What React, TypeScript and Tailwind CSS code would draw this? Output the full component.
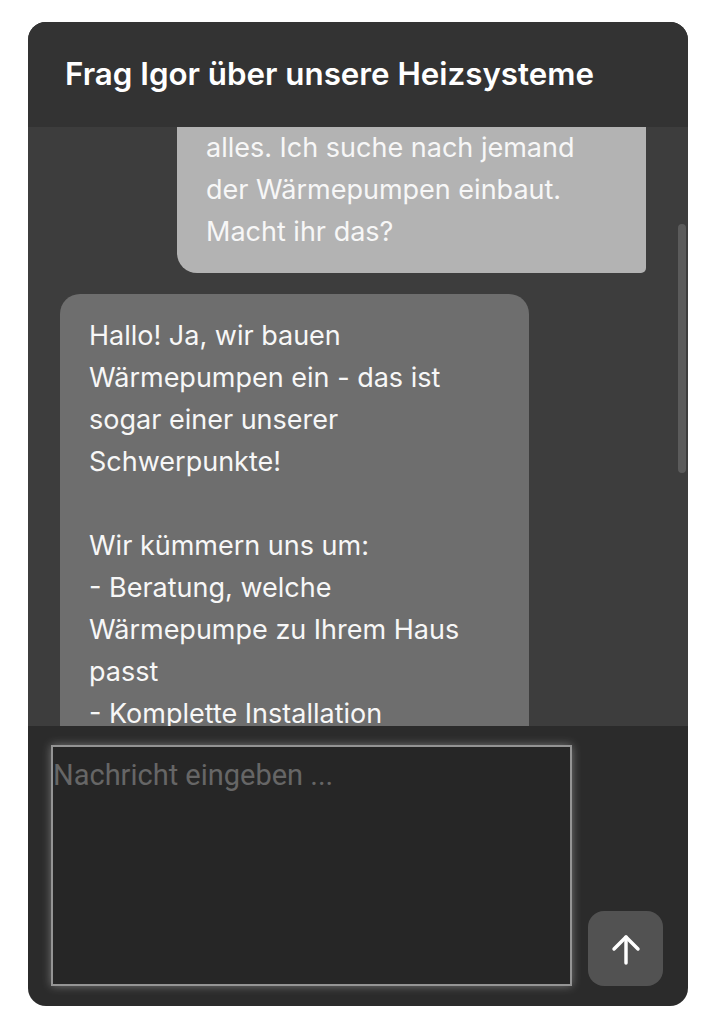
import { useLayoutEffect, useRef } from "react";

const BOT_TEXT = `Hallo! Ja, wir bauen Wärmepumpen ein - das ist sogar einer unserer Schwerpunkte!

Wir kümmern uns um:
- Beratung, welche Wärmepumpe zu Ihrem Haus passt
- Komplette Installation
- Hilfe bei Förderanträgen
- Wartung und Service

Möchten Sie einen Termin für eine Beratung vereinbaren?`;

const USER_TEXT = `Hallo Igor, danke für
alles. Ich suche nach jemand der Wärmepumpen einbaut. Macht ihr das?`;

function ArrowUp() {
  return (
    <svg width="36" height="36" viewBox="0 0 24 24" fill="none" stroke="white" strokeWidth="2.3" strokeLinecap="round" strokeLinejoin="round">
      <path d="M12 21.3V4" />
      <path d="M4 12 12 4l8 8" />
    </svg>
  );
}

export default function App() {
  const scrollRef = useRef<HTMLDivElement>(null);
  const userRef = useRef<HTMLDivElement>(null);

  useLayoutEffect(() => {
    const box = scrollRef.current;
    const bubble = userRef.current;
    if (!box || !bubble) return;
    box.scrollTop = bubble.offsetTop + bubble.offsetHeight - 146;
  }, []);

  return (
    <div className="min-h-screen bg-white pt-[22px] pr-[26px] pb-[16px] pl-[28px]" style={{ fontFamily: "Inter, 'Noto Sans', sans-serif" }}>
      <div className="flex h-[984px] flex-col overflow-hidden rounded-[18px] bg-[#2b2b2b]">
        <header className="flex h-[105px] shrink-0 items-center bg-[#333333] px-[37px]">
          <h1 className="text-[31.3px] font-semibold text-white">
            Frag Igor über unsere Heizsysteme
          </h1>
        </header>

        <div className="relative h-[599px] shrink-0 bg-[#3d3d3d]">
          <div ref={scrollRef} className="relative h-full overflow-hidden">
            <div className="flex flex-col gap-[21px] py-[32px] pl-[32px] pr-[42px]">
              <div className="w-[469px] self-start rounded-[20px] bg-[#6e6e6e] px-[29px] py-[24px] text-[27px] leading-[42px] text-[#f7f7f7]">
                Hallo! Ich bin Igor. Wie kann ich Ihnen heute helfen?
              </div>
              <div
                ref={userRef}
                className="w-[469px] self-end whitespace-pre-line rounded-[20px] rounded-br-[5px] bg-[#b3b3b3] px-[29px] pt-[24px] pb-[20px] text-[27px] leading-[42px] text-[#f7f7f7]"
              >
                {USER_TEXT}
              </div>
              <div className="w-[469px] self-start whitespace-pre-line rounded-[20px] bg-[#6e6e6e] px-[29px] pt-[21px] pb-[24px] text-[27px] leading-[42px] text-[#f7f7f7]">
                {BOT_TEXT}
              </div>
            </div>
          </div>
          <div className="absolute top-[97px] right-[2px] h-[249px] w-[8px] rounded-full bg-[#5b5b5b]" />
        </div>

        <div className="flex flex-1 items-end gap-[16px] pt-[19px] pr-[25px] pb-[20px] pl-[23px]">
          <textarea
            placeholder="Nachricht eingeben ..."
            className="h-full flex-1 resize-none border-2 border-[#949494] bg-[#262626] p-0 pt-[10px] text-[29px] leading-[36px] text-white outline-none shadow-[0_0_9px_rgba(255,255,255,0.35)] placeholder:text-[#666666]"
            style={{ fontFamily: "Roboto, sans-serif" }}
          />
          <button className="flex h-[75px] w-[75px] shrink-0 items-center justify-center rounded-[16px] bg-[#525252]">
            <ArrowUp />
          </button>
        </div>
      </div>
    </div>
  );
}
